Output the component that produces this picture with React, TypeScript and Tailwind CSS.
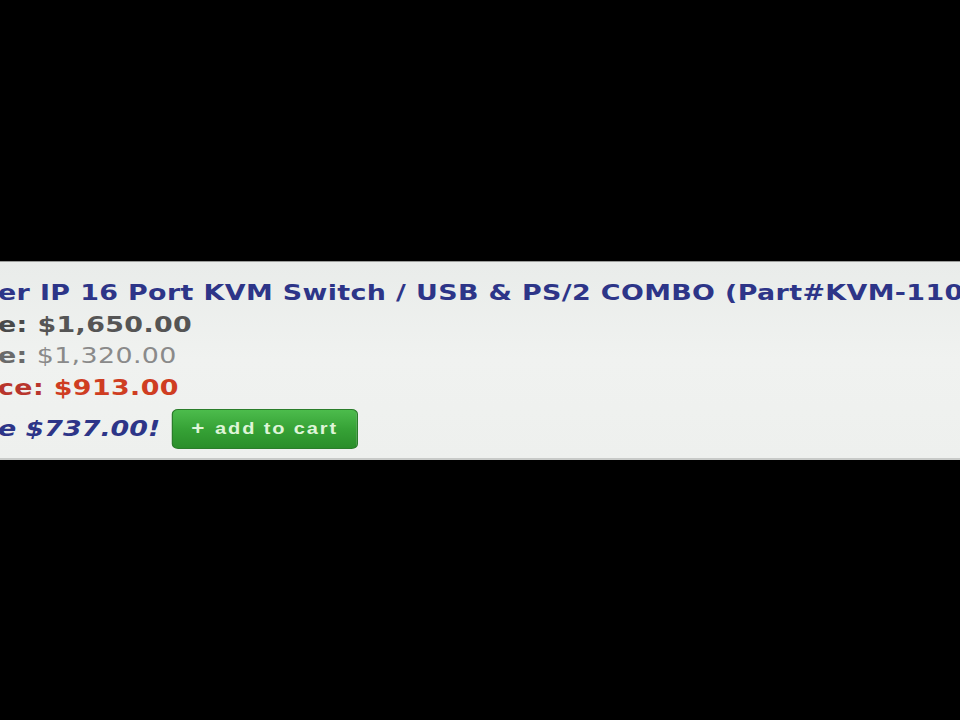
export default function App() {
  return (
    <div className="w-[960px] h-[720px] bg-black overflow-hidden flex flex-col">
      <div className="h-[261px] shrink-0" />
      <div className="h-[199px] shrink-0 bg-gradient-to-b from-[#e9ecea] via-[#f0f2f0] to-[#eef0ee] border-t border-[#9a9c9a] border-b-2 border-b-[#c8cac8] overflow-hidden">
        <div
          className="origin-left scale-x-[1.25] pt-[15px] ml-[-2px] text-[21.5px] leading-[31.5px] whitespace-nowrap tracking-[0.3px]"
          style={{ fontFamily: '"DejaVu Sans", Verdana, sans-serif' }}
        >
          <div className="font-bold text-[#2d3588]">
            er IP 16 Port KVM Switch / USB &amp; PS/2 COMBO (Part#KVM-1108)
          </div>
          <div className="font-bold">
            <span className="text-[#4a4a4a]">e:</span>{" "}
            <span className="text-[#555555]">$1,650.00</span>
          </div>
          <div>
            <span className="font-bold text-[#6a6a6a]">e:</span>{" "}
            <span className="text-[#8a8a8a]">$1,320.00</span>
          </div>
          <div className="font-bold">
            <span className="text-[#b8352c]">ce:</span>{" "}
            <span className="text-[#cf3d22]">$913.00</span>
          </div>
          <div className="mt-[6px] h-[40px] flex items-center gap-[9px]">
            <span className="font-bold italic text-[#2d3588] tracking-[0px]">e $737.00!</span>
            <button
              className="h-[40px] w-[149px] rounded-[5px] border border-[#2a7d2a] bg-gradient-to-b from-[#4cbc4c] via-[#36a236] to-[#2a8e2a] flex items-center justify-center gap-[7px] text-[#dff5d8] text-[16px] font-bold tracking-[1.5px]"
              style={{ fontFamily: '"Liberation Sans", Arial, sans-serif' }}
            >
              <span className="text-[18px]">+</span>
              <span>add to cart</span>
            </button>
          </div>
        </div>
      </div>
    </div>
  );
}
